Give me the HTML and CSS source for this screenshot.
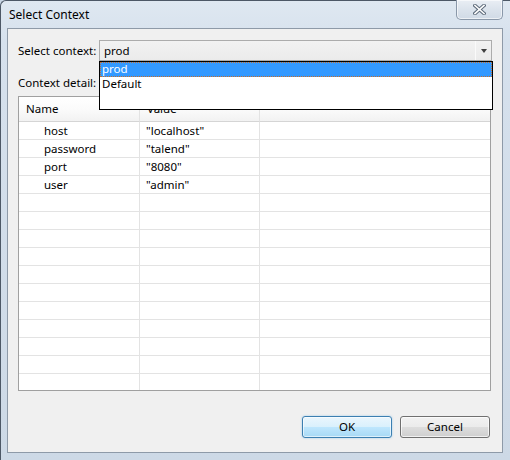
FILE: index.html
```html
<!DOCTYPE html>
<html>
<head>
<meta charset="utf-8">
<title>Select Context</title>
<link rel="stylesheet" href="styles.css">
</head>
<body>
<div class="window">
  <div class="titlebar">
    <span class="title">Select Context</span>
    <div class="close-btn">
      <svg width="13" height="11" viewBox="0 0 13 11">
        <path d="M2 1.5 L11 9.5 M11 1.5 L2 9.5" stroke="#5c6a7a" stroke-width="3.6" stroke-linecap="square" fill="none"/>
        <path d="M2 1.5 L11 9.5 M11 1.5 L2 9.5" stroke="#ffffff" stroke-width="1.6" stroke-linecap="square" fill="none"/>
      </svg>
    </div>
  </div>
  <div class="client">
    <div class="ctx-row">
      <span class="label">Select context:</span>
      <div class="combo">
        <span class="combo-text">prod</span>
        <span class="combo-arrow"><span class="tri"></span></span>
        <div class="dropdown">
          <div class="dd-item selected">prod</div>
          <div class="dd-item">Default</div>
        </div>
      </div>
    </div>
    <div class="detail-label">Context detail:</div>
    <div class="grid">
      <div class="hdr">Name</div>
      <div class="hdr">Value</div>
      <div class="hdr last"></div>

      <div class="cell name">host</div><div class="cell val">"localhost"</div><div class="cell last"></div>
      <div class="cell name">password</div><div class="cell val">"talend"</div><div class="cell last"></div>
      <div class="cell name">port</div><div class="cell val">"8080"</div><div class="cell last"></div>
      <div class="cell name">user</div><div class="cell val">"admin"</div><div class="cell last"></div>
      <div class="cell"></div><div class="cell"></div><div class="cell last"></div>
      <div class="cell"></div><div class="cell"></div><div class="cell last"></div>
      <div class="cell"></div><div class="cell"></div><div class="cell last"></div>
      <div class="cell"></div><div class="cell"></div><div class="cell last"></div>
      <div class="cell"></div><div class="cell"></div><div class="cell last"></div>
      <div class="cell"></div><div class="cell"></div><div class="cell last"></div>
      <div class="cell"></div><div class="cell"></div><div class="cell last"></div>
      <div class="cell"></div><div class="cell"></div><div class="cell last"></div>
      <div class="cell"></div><div class="cell"></div><div class="cell last"></div>
      <div class="cell"></div><div class="cell"></div><div class="cell last"></div>
      <div class="cell"></div><div class="cell"></div><div class="cell last"></div>
    </div>
    <div class="buttons">
      <div class="btn ok">OK</div>
      <div class="btn">Cancel</div>
    </div>
  </div>
</div>
</body>
</html>
```
FILE: styles.css
```css
* { box-sizing: border-box; }
html, body { margin: 0; padding: 0; }
body {
  width: 510px;
  height: 460px;
  overflow: hidden;
  font-family: "Noto Sans", "Open Sans", sans-serif;
  font-size: 11.5px;
  color: #000;
  background: #c9d6e5;
}
.window {
  width: 510px;
  height: 460px;
  border-left: 1px solid #4d5866;
  border-top: 1px solid #4d5866;
  border-top-left-radius: 6px;
  background: linear-gradient(to bottom, #dfe8f1 0px, #d6e1ed 40px, #cdd9e6 460px);
  display: flex;
  flex-direction: column;
}
.titlebar {
  height: 27px;
  display: flex;
  align-items: flex-start;
  padding-left: 8px;
}
.title {
  font-size: 12px;
  line-height: 16px;
  margin-top: 6px;
  color: #000;
  white-space: nowrap;
}
.close-btn {
  margin-left: auto;
  margin-right: 7px;
  margin-top: -1px;
  width: 47px;
  height: 20px;
  border: 1px solid #8a98a9;
  border-top: none;
  border-radius: 0 0 5px 5px;
  background: linear-gradient(to bottom, #e9eef4 0%, #dbe3ec 50%, #d0dae6 100%);
  box-shadow: inset 0 0 0 1px rgba(255,255,255,0.6);
  display: flex;
  align-items: center;
  justify-content: center;
}
.close-btn svg { display: block; margin-top: -1px; }
.client {
  margin-left: 6px;
  width: 496px;
  height: 425px;
  border: 1px solid #8e9aa8;
  background: #f0f0f0;
  padding: 11px 10px 14px 10px;
  display: flex;
  flex-direction: column;
}
.ctx-row {
  display: flex;
  align-items: center;
  height: 21px;
}
.label {
  width: 81px;
  flex: none;
  line-height: 16px;
  white-space: nowrap;
}
.combo {
  position: relative;
  flex: 1;
  height: 21px;
  border: 1px solid #acacac;
  background: linear-gradient(to bottom, #f2f2f2, #ebebeb);
  display: flex;
  align-items: center;
}
.combo-text {
  flex: 1;
  padding-left: 4px;
  line-height: 16px;
}
.combo-arrow {
  width: 16px;
  height: 19px;
  border-left: 1px solid #fafafa;
  display: flex;
  align-items: center;
  justify-content: center;
}
.tri {
  width: 0;
  height: 0;
  border-left: 3.5px solid transparent;
  border-right: 3.5px solid transparent;
  border-top: 4px solid #404040;
  margin-left: 1px;
}
.dropdown {
  position: absolute;
  top: 20px;
  left: -1px;
  width: 394px;
  height: 49px;
  border: 1px solid #000;
  background: #fff;
  z-index: 5;
}
.dd-item {
  height: 15px;
  line-height: 14px;
  padding-left: 2px;
}
.dd-item.selected {
  background: #3399ff;
  color: #fff;
  outline: 1px dotted #c86e2a;
  outline-offset: -1px;
}
.detail-label {
  margin-top: 14px;
  line-height: 15px;
  height: 15px;
  margin-bottom: 6px;
  white-space: nowrap;
}
.grid {
  width: 473px;
  height: 295px;
  border: 1px solid #a0a0a0;
  background: #fff;
  overflow: hidden;
  display: grid;
  grid-template-columns: 121px 120px 1fr;
  grid-auto-rows: 18px;
  grid-template-rows: 25px;
}
.hdr {
  height: 25px;
  background: linear-gradient(to bottom, #ffffff 0%, #fbfbfb 50%, #f2f2f2 100%);
  border-bottom: 1px solid #d5d5d5;
  border-right: 1px solid #e3e3e3;
  padding-left: 7px;
  line-height: 23px;
}
.hdr.last { border-right: none; }
.cell {
  border-bottom: 1px solid #e3e3e3;
  border-right: 1px solid #e3e3e3;
  line-height: 17px;
  white-space: nowrap;
}
.cell.last { border-right: none; }
.cell.name { padding-left: 25px; }
.cell.val { padding-left: 6px; }
.buttons {
  margin-top: 25px;
  display: flex;
  justify-content: flex-end;
  gap: 8px;
  padding-right: 2px;
}
.btn {
  width: 90px;
  height: 22px;
  border: 1px solid #707070;
  border-radius: 3px;
  background: linear-gradient(to bottom, #f2f2f2 0%, #ebebeb 50%, #dddddd 51%, #cfcfcf 100%);
  box-shadow: inset 0 0 0 1px rgba(255,255,255,0.7);
  display: flex;
  align-items: center;
  justify-content: center;
  line-height: 16px;
}
.btn.ok {
  border-color: #3c7fb1;
  background: linear-gradient(to bottom, #eaf6fd 0%, #d9f0fc 50%, #bee6fd 51%, #a7d9f5 100%);
  box-shadow: inset 0 0 0 1px rgba(255,255,255,0.6), 0 0 2px rgba(60,160,230,0.5);
}
```
